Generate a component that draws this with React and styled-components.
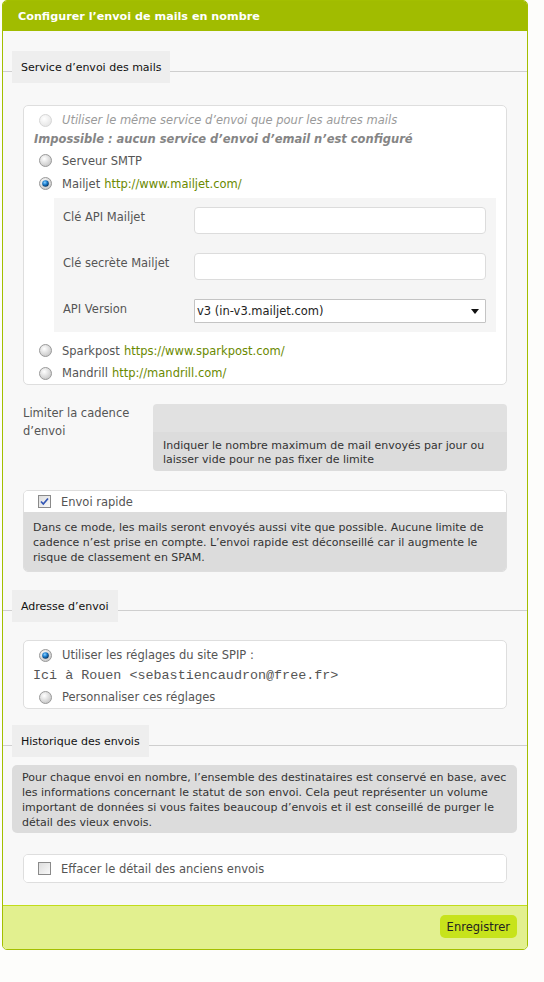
import React from "react";
import styled, { createGlobalStyle } from "styled-components";

const GlobalStyle = createGlobalStyle`
  html, body { margin: 0; padding: 0; background: #fdfdfb; }
  body {
    font-family: "DejaVu Sans", Verdana, sans-serif;
    font-size: 11.5px;
    color: #444;
  }
  * { box-sizing: border-box; }
`;

const Panel = styled.div`
  margin: 0 0 0 2px;
  width: 526px;
  border: 1px solid #a3bf00;
  border-radius: 5px;
  background: #f8f8f8;
  overflow: hidden;
`;

const Header = styled.h2`
  margin: 0;
  height: 30px;
  display: flex;
  align-items: center;
  padding-left: 15px;
  background: #a1bc00;
  color: #fff;
  font-size: 11.2px;
  font-weight: bold;
`;

const Body = styled.div`
  padding: 20px 0 22px;
`;

const LegendRow = styled.div`
  margin-top: ${(p) => p.$top || 0}px;
  height: 32px;
  padding-left: 9px;
  background: linear-gradient(
    to bottom,
    transparent 20px,
    #cfcfcf 20px,
    #cfcfcf 21px,
    transparent 21px
  );
`;

const Legend = styled.div`
  display: inline-flex;
  align-items: center;
  height: 32px;
  padding: 0 9px;
  background: #eeeeee;
  color: #111;
  font-size: 11px;
`;

const Card = styled.div`
  margin: ${(p) => p.$top || 0}px 20px 0;
  background: #fff;
  border: 1px solid #dedede;
  border-radius: 5px;
  padding: ${(p) => p.$pad || "0"};
  overflow: hidden;
`;

const OptionRow = styled.label`
  display: flex;
  align-items: center;
  height: ${(p) => p.$h || 23}px;
  padding-left: 15px;
  gap: 10px;
  color: ${(p) => (p.$disabled ? "#9a9a9a" : "#555")};
  font-style: ${(p) => (p.$disabled ? "italic" : "normal")};
`;

const Warning = styled.div`
  height: 16px;
  margin-bottom: 2px;
  display: flex;
  align-items: center;
  padding-left: 10px;
  font-weight: bold;
  font-style: italic;
  color: #858585;
`;

const Link = styled.a`
  color: #6a8900;
  text-decoration: none;
  margin-left: 4px;
`;

const SubPanel = styled.div`
  margin: 3px 10px 7px 30px;
  background: #f5f5f5;
  padding: 9px 10px 9px 9px;
  display: grid;
  grid-template-columns: 131px 1fr;
  row-gap: 19px;
`;

const FieldLabel = styled.div`
  padding-top: 3px;
  line-height: 15px;
  color: #555;
`;

const TextInput = styled.input`
  height: 27px;
  width: 100%;
  border: 1px solid #dcdcdc;
  border-radius: 4px;
  background: #fff;
  font: inherit;
`;

const SelectWrap = styled.div`
  position: relative;
  height: 24px;
`;

const Select = styled.select`
  appearance: none;
  width: 100%;
  height: 24px;
  border: 1px solid #c4c4c4;
  border-radius: 1px;
  background: #fff;
  font: inherit;
  color: #222;
  padding: 0 0 0 2px;
`;

const SelectArrow = styled.svg`
  position: absolute;
  right: 7px;
  top: 10px;
  pointer-events: none;
`;

const LimitRow = styled.div`
  margin: 19px 20px 0;
  display: grid;
  grid-template-columns: 130px 1fr;
`;

const LimitLabel = styled.div`
  line-height: 18px;
  color: #555;
`;

const GrayInput = styled.div`
  height: 28px;
  background: #e1e1e1;
  border-radius: 4px 4px 0 0;
`;

const Explain = styled.div`
  background: #dcdcdc;
  border-radius: ${(p) => p.$radius || "0 0 4px 4px"};
  padding: ${(p) => p.$pad || "7px 10px 4px"};
  font-size: 11px;
  line-height: ${(p) => p.$lh || 15}px;
  color: #333;
`;

const CheckHead = styled.label`
  display: flex;
  align-items: center;
  height: ${(p) => p.$h || 21}px;
  padding-left: 14px;
  gap: 10px;
  color: #555;
  background: #fff;
`;

const Mono = styled.div`
  height: 18px;
  margin-bottom: 2px;
  display: flex;
  align-items: center;
  padding-left: 9px;
  font-family: "Liberation Mono", "DejaVu Sans Mono", monospace;
  font-size: 13.4px;
  color: #555;
`;

const History = styled.div`
  margin: 8px 10px 0 9px;
`;

const Footer = styled.div`
  border-top: 1px solid #c2dc1c;
  background: #e2f08f;
  padding: 9px 10px 11px;
  display: flex;
  justify-content: flex-end;
`;

const Button = styled.button`
  height: 23px;
  padding: 0 7px;
  border: none;
  border-radius: 5px;
  background: #c7e31b;
  color: #222;
  font: inherit;
`;

function Radio({ checked, disabled }) {
  const id = checked ? "rc" : disabled ? "rd" : "ru";
  return (
    <svg width="13" height="13" viewBox="0 0 13 13">
      <defs>
        <radialGradient id={id + "g"} cx="40%" cy="35%" r="70%">
          <stop offset="0" stopColor="#ffffff" />
          <stop offset="1" stopColor={disabled ? "#e4e4e4" : "#c4c4c4"} />
        </radialGradient>
        <radialGradient id={id + "b"} cx="40%" cy="35%" r="65%">
          <stop offset="0" stopColor="#8fd3ff" />
          <stop offset="0.5" stopColor="#1b7ed0" />
          <stop offset="1" stopColor="#07335f" />
        </radialGradient>
      </defs>
      <circle
        cx="6.5"
        cy="6.5"
        r="6"
        fill={`url(#${id}g)`}
        stroke={disabled ? "#d6d6d6" : "#9a9a9a"}
      />
      {checked && <circle cx="6.5" cy="6.5" r="3.3" fill={`url(#${id}b)`} />}
    </svg>
  );
}

function Checkbox({ checked }) {
  return (
    <svg width="13" height="13" viewBox="0 0 13 13">
      <defs>
        <linearGradient id={checked ? "cbc" : "cbu"} x1="0" y1="0" x2="1" y2="1">
          <stop offset="0" stopColor="#dcdcdc" />
          <stop offset="1" stopColor="#fafafa" />
        </linearGradient>
      </defs>
      <rect
        x="0.5"
        y="0.5"
        width="12"
        height="12"
        fill={`url(#${checked ? "cbc" : "cbu"})`}
        stroke="#8a8a8a"
      />
      {checked && (
        <path
          d="M3 6.5 L5.3 9 L10 3.5"
          fill="none"
          stroke="#3457b5"
          strokeWidth="1.7"
        />
      )}
    </svg>
  );
}

export default function App() {
  return (
    <>
      <GlobalStyle />
      <Panel>
        <Header>Configurer l’envoi de mails en nombre</Header>
        <Body>
          <LegendRow>
            <Legend>Service d’envoi des mails</Legend>
          </LegendRow>

          <Card $top={22} $pad="3px 0 0">
            <OptionRow $h={22} $disabled>
              <Radio disabled />
              Utiliser le même service d’envoi que pour les autres mails
            </OptionRow>
            <Warning>
              Impossible : aucun service d’envoi d’email n’est configuré
            </Warning>
            <OptionRow>
              <Radio />
              Serveur SMTP
            </OptionRow>
            <OptionRow>
              <Radio checked />
              <span>
                Mailjet
                <Link>http://www.mailjet.com/</Link>
              </span>
            </OptionRow>
            <SubPanel>
              <FieldLabel>Clé API Mailjet</FieldLabel>
              <TextInput />
              <FieldLabel>Clé secrète Mailjet</FieldLabel>
              <TextInput />
              <FieldLabel>API Version</FieldLabel>
              <SelectWrap>
                <Select defaultValue="v3">
                  <option value="v3">v3 (in-v3.mailjet.com)</option>
                </Select>
                <SelectArrow width="8" height="5" viewBox="0 0 8 5">
                  <path d="M0 0 H8 L4 5 Z" fill="#111" />
                </SelectArrow>
              </SelectWrap>
            </SubPanel>
            <OptionRow>
              <Radio />
              <span>
                Sparkpost
                <Link>https://www.sparkpost.com/</Link>
              </span>
            </OptionRow>
            <OptionRow $h={22}>
              <Radio />
              <span>
                Mandrill
                <Link>http://mandrill.com/</Link>
              </span>
            </OptionRow>
          </Card>

          <LimitRow>
            <LimitLabel>
              Limiter la cadence
              <br />
              d’envoi
            </LimitLabel>
            <div>
              <GrayInput />
              <Explain $lh={14}>
                Indiquer le nombre maximum de mail envoyés par jour ou laisser
                vide pour ne pas fixer de limite
              </Explain>
            </div>
          </LimitRow>

          <Card $top={19}>
            <CheckHead>
              <Checkbox checked />
              Envoi rapide
            </CheckHead>
            <Explain $radius="0" $pad="8px 9px 6px">
              Dans ce mode, les mails seront envoyés aussi vite que possible.
              Aucune limite de cadence n’est prise en compte. L’envoi rapide est
              déconseillé car il augmente le risque de classement en SPAM.
            </Explain>
          </Card>

          <LegendRow $top={18}>
            <Legend>Adresse d’envoi</Legend>
          </LegendRow>

          <Card $top={18} $pad="3px 0 0">
            <OptionRow $h={22}>
              <Radio checked />
              Utiliser les réglages du site SPIP :
            </OptionRow>
            <Mono>Ici à Rouen &lt;sebastiencaudron@free.fr&gt;</Mono>
            <OptionRow $h={22}>
              <Radio />
              Personnaliser ces réglages
            </OptionRow>
          </Card>

          <LegendRow $top={16}>
            <Legend>Historique des envois</Legend>
          </LegendRow>

          <History>
            <Explain $radius="5px" $pad="5px 10px 3px">
              Pour chaque envoi en nombre, l’ensemble des destinataires est
              conservé en base, avec les informations concernant le statut de
              son envoi. Cela peut représenter un volume important de données si
              vous faites beaucoup d’envois et il est conseillé de purger le
              détail des vieux envois.
            </Explain>
          </History>

          <Card $top={21}>
            <CheckHead $h={27}>
              <Checkbox />
              Effacer le détail des anciens envois
            </CheckHead>
          </Card>
        </Body>
        <Footer>
          <Button>Enregistrer</Button>
        </Footer>
      </Panel>
    </>
  );
}
